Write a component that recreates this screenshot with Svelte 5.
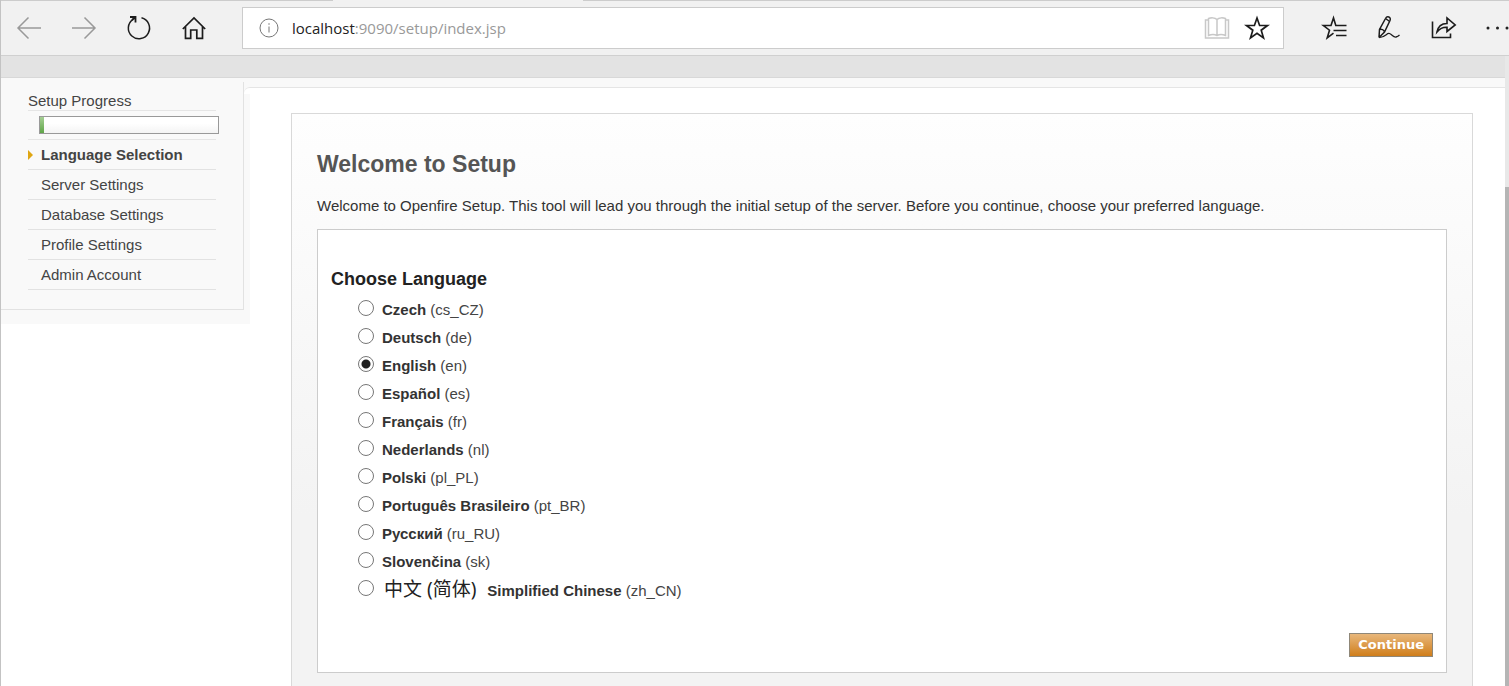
<script>
  const languages = [
    { code: 'cs_CZ', name: 'Czech' },
    { code: 'de', name: 'Deutsch' },
    { code: 'en', name: 'English' },
    { code: 'es', name: 'Español' },
    { code: 'fr', name: 'Français' },
    { code: 'nl', name: 'Nederlands' },
    { code: 'pl_PL', name: 'Polski' },
    { code: 'pt_BR', name: 'Português Brasileiro' },
    { code: 'ru_RU', name: 'Русский' },
    { code: 'sk', name: 'Slovenčina' },
    { code: 'zh_CN', name: 'Simplified Chinese', native: '中文 (简体)' }
  ];
  const steps = ['Language Selection', 'Server Settings', 'Database Settings', 'Profile Settings', 'Admin Account'];
  let selected = $state('en');
  let progress = 2;
</script>

<div class="window">
  <header class="toolbar">
    <div class="tabs"><i></i></div>
    <div class="tools">
      <button class="tool dim" aria-label="Back">
        <svg width="26" height="26" viewBox="0 0 26 26"><path d="M25 13H2M12.5 2.500L2 13l10.500 10.500" /></svg>
      </button>
      <button class="tool dim" aria-label="Forward">
        <svg width="26" height="26" viewBox="0 0 26 26"><path d="M1 13H24M13.500 2.500L24 13 13.500 23.500" /></svg>
      </button>
      <button class="tool" aria-label="Refresh">
        <svg width="26" height="26" viewBox="0 0 26 26"><path d="M15.500 2.800A10.600 10.600 0 1 1 7 4.300" stroke-width="1.500" /><path d="M4 2H9.500V7.500M6 5L9.500 2" stroke-width="1.800" /></svg>
      </button>
      <button class="tool" aria-label="Home">
        <svg width="26" height="26" viewBox="0 0 26 26"><path d="M1.800 14L13 3 24.200 14M4.500 11.500V23.300H9.700V15H15.800V23.300H21.500V11.500" stroke-width="1.700" /></svg>
      </button>
      <div class="address">
        <svg class="info" width="20" height="20" viewBox="0 0 20 20"><circle cx="10" cy="10" r="9" /><path d="M10 8.500V14.500M10 5.200V6.800" /></svg>
        <a class="url" href="#setup"><span>localhost</span>:9090/setup/index.jsp</a>
        <button class="small book" aria-label="Reading view">
          <svg width="26" height="26" viewBox="0 0 26 26"><path d="M13 4.500V20.500M13 4.500C11 2.500 7 2.500 4.500 3.500V20.500C7 19.500 11 19.500 13 20.500C15 19.500 19 19.500 21.500 20.500V3.500C19 2.500 15 2.500 13 4.500M4.500 5H1.500V23H24.500V5H21.500" /></svg>
        </button>
        <button class="small" aria-label="Add to favorites">
          <svg width="26" height="26" viewBox="0 0 26 26"><path d="M13 3L15.600 10.500H23.500L17.200 15.200 19.500 23 13 18.400 6.500 23 8.800 15.200 2.500 10.500H10.400Z" stroke-width="1.700" /></svg>
        </button>
      </div>
      <button class="tool" aria-label="Favorites">
        <svg width="26" height="26" viewBox="0 0 26 26"><path d="M12.500 18.200L6.200 23 8.500 15.200 2.200 10.500H10L12.500 3 14.800 10.500H25.500M12.500 15.500H25.500M15 20.500H25.500" stroke-width="1.600" /></svg>
      </button>
      <button class="tool" aria-label="Web note">
        <svg width="26" height="26" viewBox="0 0 26 26"><path d="M3 22.500L3.500 14.500 9.500 3.500C11 .5 15.500 1.800 14 5.500L8.500 17 3 22.500M3.500 14.500C5.500 13.800 8 14.800 8.500 17M9.500 3.500L13 6" stroke-width="1.500" /><path d="M3 22.500C10 22.500 10.500 17.500 13.500 18.500C16.500 19.500 17 22.500 20 22C22 21.500 23 20.500 23.500 20" stroke-width="1.300" /></svg>
      </button>
      <button class="tool" aria-label="Share">
        <svg width="26" height="26" viewBox="0 0 26 26"><path d="M1.500 6.500V22.500H19.500V18.500M6 17C7 11.500 10.500 8.500 16 8.500V3L24.200 10 16 16.500V12.300C11.500 12 8.500 14 6 17Z" stroke-width="1.600" /></svg>
      </button>
      <button class="tool more" aria-label="More">
        <svg width="23" height="26" viewBox="0 0 23 26"><g class="dots"><circle cx="2" cy="13" r="1.500" /><circle cx="11.500" cy="13" r="1.500" /><circle cx="21" cy="13" r="1.500" /></g></svg>
      </button>
    </div>
  </header>

  <div class="viewport">
    <div class="page">
      <div class="band"></div>
      <div class="columns">
        <aside>
          <nav>
            <div class="caption">Setup Progress</div>
            <div class="meter"><div class="bar"><span style="width: {progress}%"></span></div></div>
            {#each steps as step, i}
              <a href="#step{i}" class="step" class:current={i === 0}>{step}</a>
            {/each}
          </nav>
        </aside>
        <main>
          <section class="panel">
            <h1>Welcome to Setup</h1>
            <p>Welcome to Openfire Setup. This tool will lead you through the initial setup of the server. Before you continue, choose your preferred language.</p>
            <form class="box" onsubmit={(e) => e.preventDefault()}>
              <h2>Choose Language</h2>
              <div class="list">
                {#each languages as l}
                  <label>
                    <input type="radio" name="locale" value={l.code} bind:group={selected} />
                    <span>{#if l.native}<span class="native" lang="zh-CN">{l.native}</span>{/if}<b>{l.name}</b> ({l.code})</span>
                  </label>
                {/each}
              </div>
              <button class="continue">Continue</button>
            </form>
          </section>
        </main>
      </div>
    </div>
    <div class="scroll"><div class="thumb"></div></div>
  </div>
</div>

<style>
  :global(body) { margin: 0; background: #fff; }
  .window {
    box-sizing: border-box;
    height: 100vh;
    min-height: 420px;
    display: flex;
    flex-direction: column;
    overflow: hidden;
    border-left: 1px solid #c3c3c3;
    font: 15px/20px "Liberation Sans", Arial, sans-serif;
    color: #444;
  }
  .toolbar { flex: none; background: #f1f1f1; border-bottom: 1px solid #d0d0d0; }
  .tabs { height: 1px; background: #ccc; display: flex; }
  .tabs i { width: 250px; margin-left: 332px; background: #f1f1f1; }
  .tools { height: 54px; display: flex; align-items: center; }
  button { font: inherit; border: 0; margin: 0; padding: 0; background: none; }
  svg { display: block; fill: none; stroke: #1c1c1c; }
  .tool { width: 55px; height: 48px; flex: none; display: grid; place-items: center; }
  .dim svg { stroke: #999; stroke-width: 1.5; }
  .more { width: 38px; justify-items: end; }
  .dots { fill: #222; stroke: none; }
  .address {
    flex: 1;
    box-sizing: border-box;
    height: 42px;
    margin: 0 22px 0 21px;
    padding: 0 13px 0 16px;
    display: flex;
    align-items: center;
    background: #fff;
    border: 1px solid #ccc;
  }
  .info { stroke: #777; }
  .url {
    flex: 1;
    margin-left: 13px;
    font: 15px/20px "Open Sans", "Noto Sans", sans-serif;
    color: #999;
    text-decoration: none;
  }
  .url span { color: #222; }
  .small { margin-left: 14px; }
  .book svg { stroke: #c8c8c8; stroke-width: 1.5; }

  .viewport { flex: 1; min-height: 0; display: flex; }
  .page { flex: 1; min-width: 0; overflow: hidden; }
  .band { height: 21px; background: #e3e3e3; border-bottom: 1px solid #d8d8d8; }
  .columns { display: flex; align-items: flex-start; padding-top: 4px; background: linear-gradient(#f9f9f9 9px, #fff 9px); }
  aside { flex: none; width: 249px; padding-bottom: 14px; background: #f9f9f9; }
  nav {
    width: 188px;
    padding: 9px 27px 19px;
    border: 1px solid #e2e2e2;
    border-width: 0 1px 1px 0;
  }
  .caption { height: 19px; border-bottom: 1px solid #e5e5e5; }
  .meter { height: 28px; border-bottom: 1px solid #e5e5e5; }
  .bar {
    box-sizing: border-box;
    width: 180px;
    height: 18px;
    margin-left: 11px;
    border: 1px solid #999;
    background: linear-gradient(#fff 40%, #f4f4f4);
    display: flex;
    position: relative;
    top: 5px;
  }
  .bar span { background: linear-gradient(#a5cf93, #5fa548); }
  .step {
    display: flex;
    align-items: center;
    gap: 8px;
    height: 29px;
    padding-left: 13px;
    border-bottom: 1px solid #e2e2e2;
    color: #444;
    text-decoration: none;
  }
  .current { padding-left: 0; font-weight: bold; }
  .current::before { content: ""; border: 5px solid transparent; border-left-color: #dfa613; border-right-width: 0; }
  main {
    flex: 1;
    min-width: 0;
    box-sizing: border-box;
    margin: 5px 0 0 -6px;
    padding: 25px 32px 20px 47px;
    border-top: 1px solid #e5e5e5;
    border-top-left-radius: 6px;
    background: linear-gradient(90deg, #f9f9f9 6px, #fff 6px) 0 6px / 100% 230px no-repeat, #fff;
  }
  .panel {
    padding: 36px 25px 20px;
    border: 1px solid #d9d9d9;
    background: linear-gradient(#fefefe, #f3f3f3 400px);
  }
  h1 { margin: 0; font-size: 23px; line-height: 28px; color: #555; }
  p { margin: 18px 0 13px; color: #333; }
  .box {
    padding: 35px 13px 15px;
    border: 1px solid #ccc;
    background: #fff;
    display: flex;
    flex-direction: column;
  }
  h2 { margin: 0; font-size: 18px; line-height: 28px; color: #222; }
  .list { padding-left: 27px; margin: 3px 0 29px; }
  label { display: flex; align-items: center; height: 28px; gap: 8px; white-space: pre; }
  label b { color: #333; }
  input {
    appearance: none;
    box-sizing: border-box;
    width: 16px;
    height: 16px;
    margin: 0 0 4px;
    border: 1px solid #777;
    border-radius: 50%;
    background: #fff;
  }
  input:checked { background: radial-gradient(circle, #222 4px, #fff 5px); }
  .native { font: 19px/20px "Noto Sans", "Noto Sans CJK SC", sans-serif; color: #222; margin: 0 11px 0 2px; }
  .continue {
    align-self: flex-end;
    height: 24px;
    padding: 0 8px;
    border: 1px solid #8f8778;
    background: linear-gradient(#e8b77b, #d07e1b);
    color: #fff;
    font: bold 13px/20px "DejaVu Sans", Verdana, sans-serif;
  }
  .scroll { flex: none; width: 4px; background: #e8e8e8; overflow: hidden; }
  .thumb { height: 100%; margin-top: 131px; background: #b5b5b5; }
</style>
